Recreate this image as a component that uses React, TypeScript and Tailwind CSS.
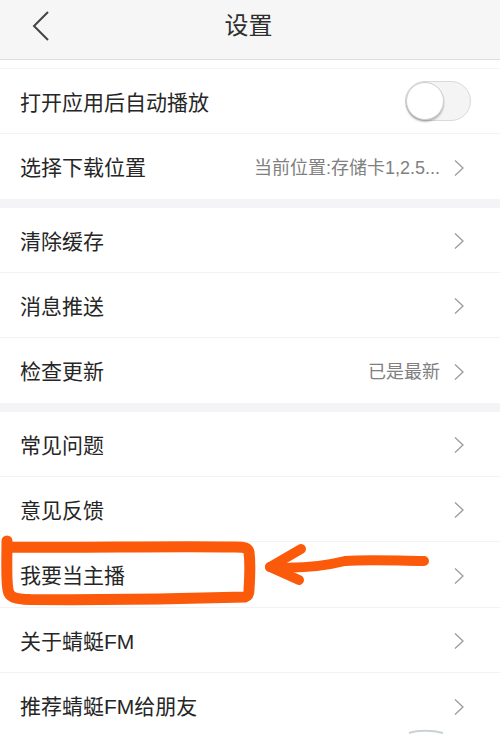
const Chevron = () => (
  <svg width="12" height="18" viewBox="0 0 12 18" fill="none" stroke="#9b9b9b" strokeWidth="1.3" className="shrink-0 mt-[2px]">
    <path d="M2 1.5 L10 9 L2 16.5" />
  </svg>
);

function Row({ label, value, noChevron, children, h = "h-[65px]", border = true }: { label: string; value?: string; noChevron?: boolean; children?: React.ReactNode; h?: string; border?: boolean }) {
  return (
    <div className={`${h} flex items-center pl-5 pr-[35px] ${border ? "border-b border-[#f3f3f3]" : ""}`}>
      <span className="text-[21px] text-[#262626] flex-1 leading-none pt-[2px]">{label}</span>
      {value && <span className="text-[18px] text-[#808080] mr-[13px] leading-none pt-[2px]">{value}</span>}
      {!noChevron && <Chevron />}
      {children}
    </div>
  );
}

export default function App() {
  return (
    <div className="relative w-[500px] h-[734px] overflow-hidden bg-white" style={{ fontFamily: '"Liberation Sans", "Noto Sans CJK SC", sans-serif' }}>
      <header className="h-[60px] bg-[#f6f6f6] border-b border-[#dedede] relative flex items-center justify-center pb-[7px] pr-[3px]">
        <svg width="20" height="32" viewBox="0 0 20 32" fill="none" stroke="#444444" strokeWidth="2" className="absolute left-[31px] top-[10px]">
          <path d="M17 2 L3 16 L17 30" />
        </svg>
        <h1 className="text-[24px] text-[#2e2e2e] leading-none font-normal">设置</h1>
      </header>
      <div className="h-[9px] border-b border-[#f5f5f5]" />
      <Row label="打开应用后自动播放" noChevron>
        <div className="relative w-[66px] h-[40px] -mr-[6px] rounded-full bg-[#f4f4f4] border border-[#d9d9d9]">
          <div className="absolute left-0 top-0 w-[38px] h-[38px] rounded-full bg-white border border-[#cfcfcf] shadow-[0_2px_2px_rgba(0,0,0,0.25)]" />
        </div>
      </Row>
      <Row label="选择下载位置" value="当前位置:存储卡1,2.5..." border={false} />
      <div className="h-[9px] bg-[#f4f4f6]" />
      <Row label="清除缓存" />
      <Row label="消息推送" />
      <Row label="检查更新" value="已是最新" border={false} />
      <div className="h-[9px] bg-[#f4f4f6]" />
      <Row label="常见问题" />
      <Row label="意见反馈" />
      <Row label="我要当主播" h="h-[66px]" />
      <Row label="关于蜻蜓FM" />
      <Row label="推荐蜻蜓FM给朋友" border={false} />
      <svg width="500" height="734" viewBox="0 0 500 734" fill="none" className="absolute left-0 top-0 pointer-events-none">
        <path d="M7 541 C7 560 6 580 8 590 C9 597 14 599 30 599.5 C100 600 180 599 245 597 C248 596 249 594 249 590 C250 575 250 560 249 552 C248 548 245 547 235 547 C160 546 80 548 10 547" stroke="#fb5a0b" strokeWidth="11" strokeLinecap="round" strokeLinejoin="round" />
        <path d="M301 549 L270 567 L299 580" stroke="#fb5a0b" strokeWidth="10" strokeLinecap="round" strokeLinejoin="round" />
        <path d="M270 567 C300 569 325 566 345 561 C370 559 400 561 424 561" stroke="#fb5a0b" strokeWidth="10" strokeLinecap="round" />
        <path d="M409 733 C418 730 432 730 443 733" stroke="#c9d3d6" strokeWidth="2" />
      </svg>
    </div>
  );
}
